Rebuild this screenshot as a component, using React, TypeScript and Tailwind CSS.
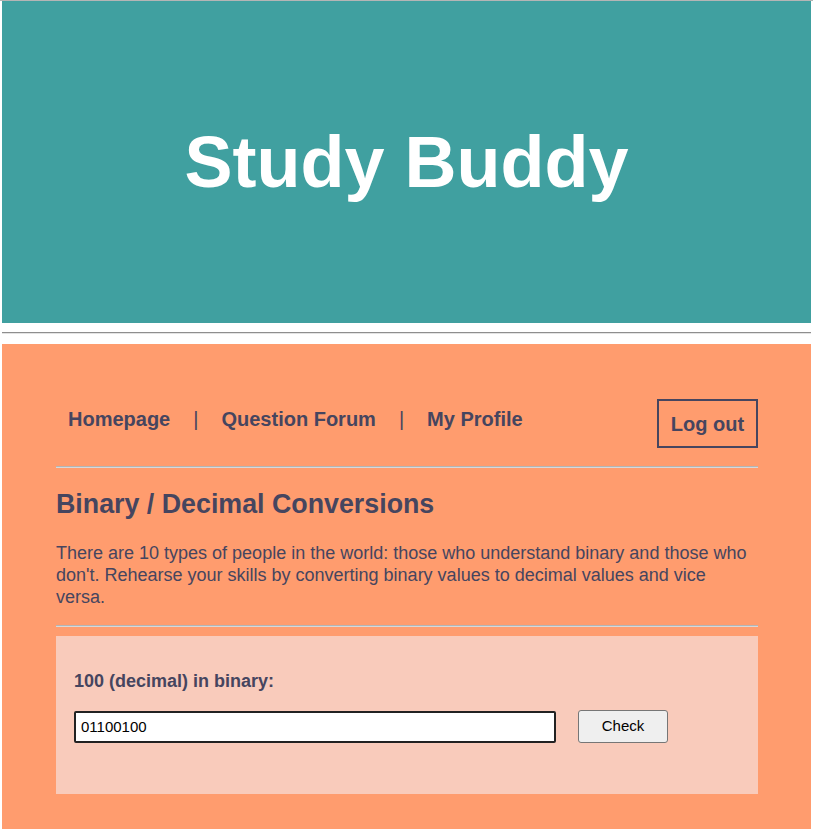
export default function App() {
  return (
    <div className="min-h-screen bg-white font-['Liberation_Sans',Arial,sans-serif] text-[#46455f]">
      <div className="h-px bg-[#b5b5b5]" />
      <div className="px-[2px]">
        <header className="flex h-[322px] items-center justify-center bg-[#40a0a0]">
          <h1 className="text-[72px] font-bold leading-none text-white">Study Buddy</h1>
        </header>
        <div className="pt-[9px] pb-[10px]">
          <div className="border-t border-b border-t-[#8e8e8e] border-b-[#e3e3e3]" />
        </div>
        <main className="bg-[#ff9c6e] pt-[55px] pb-[48px]">
          <div className="ml-[54px] w-[702px]">
            <nav className="flex items-start justify-between pl-[12px]">
              <ul className="mt-[5px] flex items-center text-[20px] font-bold">
                <li>Homepage</li>
                <li className="px-[23px] font-normal">|</li>
                <li>Question Forum</li>
                <li className="px-[23px] font-normal">|</li>
                <li>My Profile</li>
              </ul>
              <button className="h-[49px] w-[101px] border-2 border-[#46455f] text-[20px] font-bold">
                Log out
              </button>
            </nav>
            <div className="mt-[18px] border-t border-b border-t-[#b4b4b4] border-b-[#d8d8d8]" />
            <h2 className="mt-[21px] text-[26.8px] font-bold leading-[31px]">
              Binary / Decimal Conversions
            </h2>
            <p className="mt-[22px] text-[18px] leading-[22px]">
              There are 10 types of people in the world: those who understand binary and those who
              don't. Rehearse your skills by converting binary values to decimal values and vice
              versa.
            </p>
            <div className="mt-[17px] border-t border-b border-t-[#b4b4b4] border-b-[#d8d8d8]" />
            <section className="mt-[9px] bg-[#f9cbbb] pl-[18px] pr-[17px] pt-[35px] pb-[51px]">
              <label className="block text-[18px] font-bold leading-[21px]">
                100 (decimal) in binary:
              </label>
              <div className="mt-[18px] flex items-center">
                <input
                  defaultValue="01100100"
                  className="h-[32px] w-[482px] rounded-[2px] border-2 border-[#222] bg-white px-[5px] font-['Liberation_Sans',Arial,sans-serif] text-[15px] text-black outline-none"
                />
                <button className="ml-[22px] h-[33px] w-[90px] rounded-[3px] border border-[#767676] bg-[#efefef] text-[15px] text-black">
                  Check
                </button>
              </div>
            </section>
          </div>
        </main>
      </div>
    </div>
  );
}
